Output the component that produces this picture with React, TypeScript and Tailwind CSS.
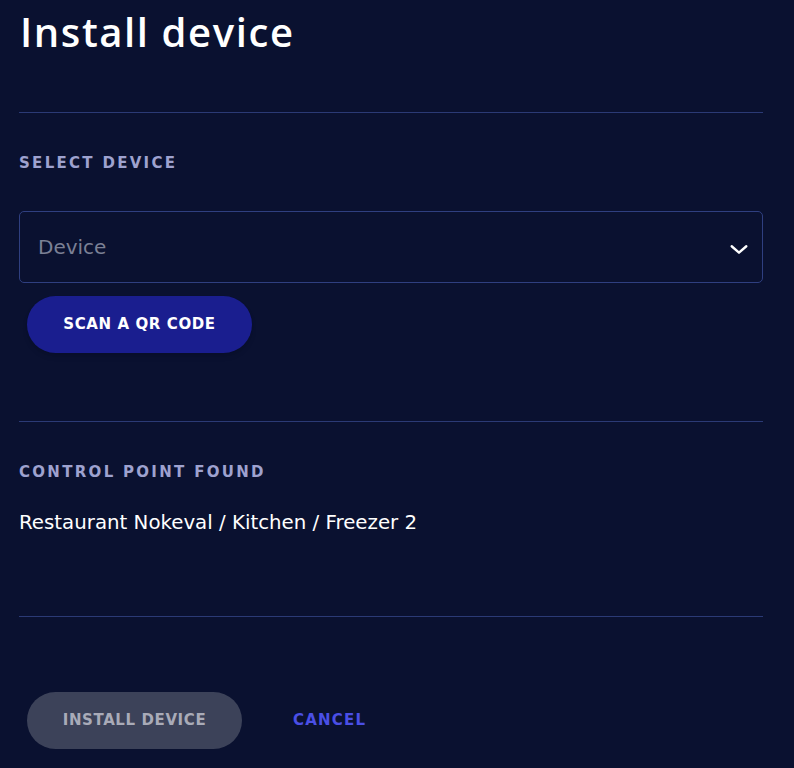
import React from "react";

export default function App() {
  const body = { fontFamily: '"DejaVu Sans", "Noto Sans", sans-serif' };
  const title = { fontFamily: '"Open Sans", "Noto Sans", sans-serif' };
  return (
    <div className="min-h-[768px] w-full bg-[#0a1130] text-white" style={body}>
      <div className="px-[19px] pr-[31px]">
        <h1 className="pt-[8px] text-[40px] font-semibold leading-[48px] pl-[1px] tracking-[1.6px]" style={title}>Install device</h1>
        <div className="mt-[56px] h-px bg-[#2b3a75]" />
        <div className="mt-[40px] text-[15px] font-bold leading-[20px] tracking-[2.3px] text-[#9ea2cf]">SELECT DEVICE</div>
        <div className="mt-[38px] flex h-[72px] items-center justify-between rounded-[5px] border border-[#2f3f80] pl-[18px] pr-[12px]">
          <span className="text-[20px] text-[#7b8095]">Device</span>
          <svg width="22" height="22" viewBox="0 0 24 24" fill="none" stroke="white" strokeWidth="2.6" strokeLinecap="round" strokeLinejoin="round" className="mt-[4px]">
            <path d="M4 9l8 7 8-7" />
          </svg>
        </div>
        <div className="mt-[13px] pl-[8px]">
          <button className="h-[57px] w-[225px] rounded-full bg-[#1a1e8f] text-[15px] font-bold tracking-[0.04em] text-white shadow-md">SCAN A QR CODE</button>
        </div>
        <div className="mt-[68px] h-px bg-[#2b3a75]" />
        <div className="mt-[40px] text-[15px] font-bold leading-[20px] tracking-[2.3px] text-[#9ea2cf]">CONTROL POINT FOUND</div>
        <div className="mt-[29px] text-[19.8px] leading-[24px] text-white">Restaurant Nokeval / Kitchen / Freezer 2</div>
        <div className="mt-[81px] h-px bg-[#2b3a75]" />
        <div className="mt-[75px] flex items-center pl-[8px]">
          <button className="h-[57px] w-[215px] rounded-full bg-[#3c4259] text-[15px] font-bold tracking-[0.04em] text-[#a9abb8]">INSTALL DEVICE</button>
          <span className="ml-[51px] text-[15px] font-bold tracking-[0.08em] text-[#4a4fe6]">CANCEL</span>
        </div>
      </div>
    </div>
  );
}
